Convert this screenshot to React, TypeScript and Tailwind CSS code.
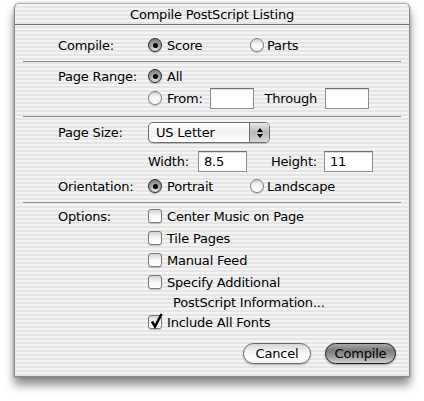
import React from "react";

function Radio({ on }: { on?: boolean }) {
  return (
    <span
      className={
        on
          ? "w-[14px] h-[14px] shrink-0 rounded-full border border-[#2e2e2e] bg-[radial-gradient(circle_at_50%_85%,#e2e2e2_0%,#a8a8a8_45%,#6e6e6e_100%)] shadow-[0_1px_1px_rgba(0,0,0,0.25)] flex items-center justify-center"
          : "w-[14px] h-[14px] shrink-0 rounded-full border border-[#7e7e7e] bg-[linear-gradient(to_bottom,#cfcfcf_0%,#f7f7f7_45%,#ffffff_100%)] shadow-[0_1px_1px_rgba(0,0,0,0.2)]"
      }
    >
      {on && <span className="w-[5px] h-[5px] rounded-full bg-black" />}
    </span>
  );
}

function Check({ on }: { on?: boolean }) {
  return (
    <span className="relative w-[14px] h-[14px] shrink-0 rounded-[3px] border border-[#7a7a7a] bg-[linear-gradient(to_bottom,#d4d4d4_0%,#f8f8f8_50%,#ffffff_100%)] shadow-[0_1px_1px_rgba(0,0,0,0.2)]">
      {on && (
        <svg className="absolute left-[1px] -top-[3px]" width="14" height="16" viewBox="0 0 14 16">
          <path d="M2 8.5 L5 13.5 L11.5 1" fill="none" stroke="#000" strokeWidth="2.6" strokeLinejoin="miter" />
        </svg>
      )}
    </span>
  );
}

function Field({ w, value }: { w: string; value?: string }) {
  return (
    <span className={`${w} h-[21px] shrink-0 bg-white border border-[#8e8e8e] border-t-[#6e6e6e] shadow-[inset_0_1px_1px_rgba(0,0,0,0.15)] pl-[5px] flex items-center`}>
      {value}
    </span>
  );
}

function Sep({ mt }: { mt: string }) {
  return <div className={`${mt} mx-[8px] h-px bg-[#8c8c8c] shrink-0`} />;
}

export default function App() {
  return (
    <div className="w-[424px] h-[401px] bg-white pt-[3px] pl-[14px] font-['DejaVu_Sans',sans-serif] text-[13px] tracking-[-0.2px] text-black leading-none">
      <div className="w-[396px] h-[374px] rounded-t-[5px] border border-[#8a8a8a] border-t-[#b4b4b4] bg-[repeating-linear-gradient(to_bottom,#f4f4f4_0px,#f4f4f4_2px,#e5e5e5_2px,#e5e5e5_4px)] shadow-[0_8px_10px_rgba(0,0,0,0.45),0_0_3px_rgba(0,0,0,0.3)] flex flex-col">
        <div className="h-[21px] shrink-0 border-b border-[#6f6f6f] flex items-center justify-center">
          Compile PostScript Listing
        </div>

        {/* Compile */}
        <div className="mt-[9px] h-[22px] pl-[43px] flex items-center">
          <span className="w-[90px]">Compile:</span>
          <span className="w-[102px] flex items-center gap-[5px]">
            <Radio on />
            Score
          </span>
          <span className="flex items-center gap-[3px]">
            <Radio />
            Parts
          </span>
        </div>
        <Sep mt="mt-[5px]" />

        {/* Page Range */}
        <div className="mt-[3px] h-[22px] pl-[43px] flex items-center">
          <span className="w-[90px]">Page Range:</span>
          <span className="flex items-center gap-[5px]">
            <Radio on />
            All
          </span>
        </div>
        <div className="h-[22px] pl-[133px] flex items-center">
          <Radio />
          <span className="ml-[5px]">From:</span>
          <span className="ml-[7px]">
            <Field w="w-[44px]" />
          </span>
          <span className="ml-[11px]">Through</span>
          <span className="ml-[8px]">
            <Field w="w-[44px]" />
          </span>
        </div>
        <Sep mt="mt-[7px]" />

        {/* Page Size */}
        <div className="mt-[5px] h-[21px] pl-[43px] flex items-center">
          <span className="w-[90px]">Page Size:</span>
          <span className="w-[122px] h-[21px] rounded-[5px] border border-[#6e6e6e] bg-[linear-gradient(to_bottom,#ffffff_0%,#f2f2f2_50%,#ffffff_100%)] shadow-[0_1px_1px_rgba(0,0,0,0.2)] flex overflow-hidden">
            <span className="flex-1 flex items-center pl-[7px]">US Letter</span>
            <span className="w-[20px] border-l border-[#6e6e6e] bg-[linear-gradient(to_bottom,#e8e8e8_0%,#b8b8b8_50%,#d8d8d8_100%)] flex flex-col items-center justify-center gap-[2px]">
              <svg width="6" height="4" viewBox="0 0 6 4">
                <path d="M3 0 L6 4 L0 4 Z" fill="#000" />
              </svg>
              <svg width="6" height="4" viewBox="0 0 6 4">
                <path d="M0 0 L6 0 L3 4 Z" fill="#000" />
              </svg>
            </span>
          </span>
        </div>
        <div className="mt-[8px] h-[21px] pl-[133px] flex items-center">
          <span className="w-[50px]">Width:</span>
          <Field w="w-[49px]" value="8.5" />
          <span className="ml-[24px] w-[53px]">Height:</span>
          <Field w="w-[49px]" value="11" />
        </div>
        <div className="mt-[3px] h-[22px] pl-[43px] flex items-center">
          <span className="w-[90px]">Orientation:</span>
          <span className="w-[102px] flex items-center gap-[5px]">
            <Radio on />
            Portrait
          </span>
          <span className="flex items-center gap-[3px]">
            <Radio />
            Landscape
          </span>
        </div>
        <Sep mt="mt-[5px]" />

        {/* Options */}
        <div className="mt-[2px] h-[22px] pl-[43px] flex items-center">
          <span className="w-[90px]">Options:</span>
          <span className="flex items-center gap-[5px]">
            <Check />
            Center Music on Page
          </span>
        </div>
        <div className="h-[22px] pl-[133px] flex items-center gap-[5px]">
          <Check />
          Tile Pages
        </div>
        <div className="h-[22px] pl-[133px] flex items-center gap-[5px]">
          <Check />
          Manual Feed
        </div>
        <div className="h-[22px] pl-[133px] flex items-center gap-[5px]">
          <Check />
          Specify Additional
        </div>
        <div className="h-[18px] pl-[158px] flex items-center">PostScript Information...</div>
        <div className="h-[22px] pl-[133px] flex items-center gap-[5px]">
          <Check on />
          Include All Fonts
        </div>

        <div className="mt-[10px] h-[21px] pr-[13px] flex justify-end gap-[14px]">
          <button className="w-[68px] h-[21px] rounded-full border border-[#6a6a6a] bg-[linear-gradient(to_bottom,#d6d6d6_0%,#f4f4f4_40%,#ffffff_75%,#f0f0f0_100%)] shadow-[0_1px_2px_rgba(0,0,0,0.3)] text-black flex items-center justify-center">
            Cancel
          </button>
          <button className="w-[71px] h-[21px] rounded-full border border-[#1e1e1e] bg-[linear-gradient(to_bottom,#a8a8a8_0%,#7a7a7a_35%,#9a9a9a_65%,#d0d0d0_100%)] shadow-[0_1px_2px_rgba(0,0,0,0.35)] text-black flex items-center justify-center">
            Compile
          </button>
        </div>
      </div>
    </div>
  );
}
